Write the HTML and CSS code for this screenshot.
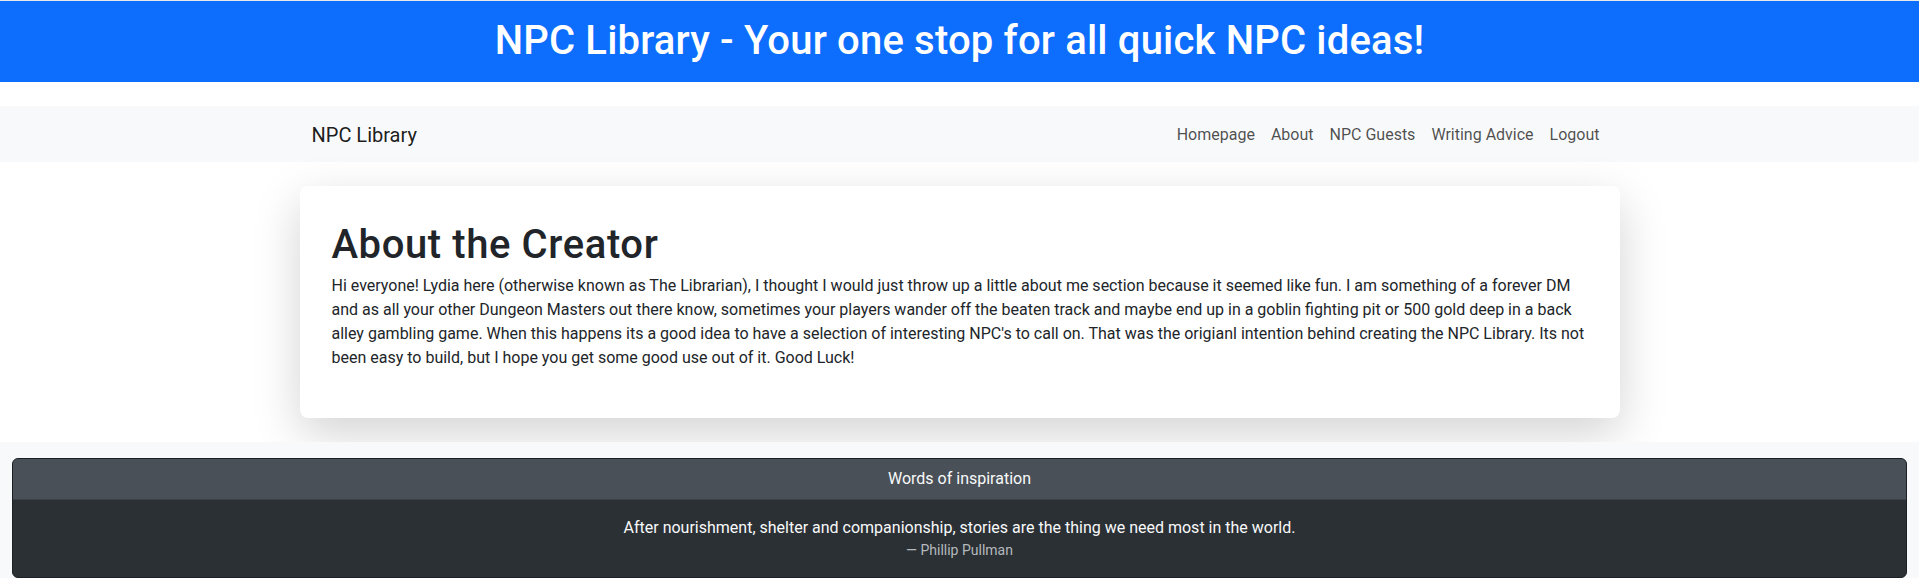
FILE: index.html
```html
<!DOCTYPE html>
<html lang="en">
<head>
<meta charset="utf-8">
<title>NPC Library - About</title>
<link rel="stylesheet" href="styles.css">
</head>
<body>
<header class="site-header">
  <h1 class="site-title">NPC Library - Your one stop for all quick NPC ideas!</h1>
</header>

<nav class="navbar">
  <div class="container nav-inner">
    <a class="brand" href="#">NPC Library</a>
    <ul class="nav-links">
      <li><a class="nav-link" href="#">Homepage</a></li>
      <li><a class="nav-link" href="#">About</a></li>
      <li><a class="nav-link" href="#">NPC Guests</a></li>
      <li><a class="nav-link" href="#">Writing Advice</a></li>
      <li><a class="nav-link" href="#">Logout</a></li>
    </ul>
  </div>
</nav>

<main class="container about-card">
  <h2 class="about-title">About the Creator</h2>
  <p class="about-text">Hi everyone! Lydia here (otherwise known as The Librarian), I thought I would just throw up a little about me section because it seemed like fun. I am something of a forever DM and as all your other Dungeon Masters out there know, sometimes your players wander off the beaten track and maybe end up in a goblin fighting pit or 500 gold deep in a back alley gambling game. When this happens its a good idea to have a selection of interesting NPC's to call on. That was the origianl intention behind creating the NPC Library. Its not been easy to build, but I hope you get some good use out of it. Good Luck!</p>
</main>

<footer class="site-footer">
  <div class="quote-card">
    <div class="quote-header">Words of inspiration</div>
    <div class="quote-body">
      <blockquote class="quote">
        <p class="quote-text">After nourishment, shelter and companionship, stories are the thing we need most in the world.</p>
        <div class="quote-author">— Phillip Pullman</div>
      </blockquote>
    </div>
  </div>
</footer>
</body>
</html>
```

FILE: styles.css
```css
* { box-sizing: border-box; }

body {
  margin: 0;
  font-family: Roboto, "Liberation Sans", sans-serif;
  font-size: 16px;
  line-height: 1.5;
  color: #212529;
  background: #fff;
  border-top: 1px solid #e6e8ea;
}

.container {
  width: 1320px;
  margin: 0 auto;
  padding: 0 12px;
}

.site-header {
  background: #0d6efd;
  color: #fff;
  text-align: center;
  padding: 16px 0 17px;
}

.site-title {
  margin: 0;
  font-size: 40px;
  line-height: 1.2;
  font-weight: 500;
  letter-spacing: 0.18px;
}

.navbar {
  margin-top: 24px;
  background: #f8f9fa;
}

.nav-inner {
  display: flex;
  align-items: center;
  justify-content: space-between;
  height: 56px;
}

.brand {
  font-size: 20px;
  line-height: 30px;
  padding-top: 1px;
  color: rgba(0, 0, 0, 0.9);
  text-decoration: none;
}

.nav-links {
  display: flex;
  list-style: none;
  margin: 0;
  padding: 0;
}

.nav-link {
  display: block;
  padding: 9px 8px 7px;
  color: rgba(0, 0, 0, 0.7);
  text-decoration: none;
}

.about-card {
  margin-top: 24px;
  padding: 32px;
  border-radius: 8px;
  box-shadow: 0 16px 48px rgba(0, 0, 0, 0.175);
  background: #fff;
}

.about-title {
  margin: 3px 0 5px;
  font-size: 40px;
  line-height: 1.2;
  font-weight: 500;
  letter-spacing: 0.6px;
}

.about-text {
  margin: 0 0 16px;
}

.site-footer {
  margin-top: 24px;
  background: #f8f9fa;
  padding: 16px 12px;
}

.quote-card {
  border: 1px solid #1c1f23;
  border-radius: 6px;
  overflow: hidden;
  text-align: center;
  color: #f8f9fa;
  background: #2b3035;
}

.quote-header {
  background: #495057;
  padding: 8px 16px;
  border-bottom: 1px solid #3d4247;
}

.quote-body {
  padding: 16px;
}

.quote {
  margin: 0;
}

.quote-text {
  margin: 0;
}

.quote-author {
  font-size: 14px;
  line-height: 1.5;
  color: #b5b8bc;
}
```
